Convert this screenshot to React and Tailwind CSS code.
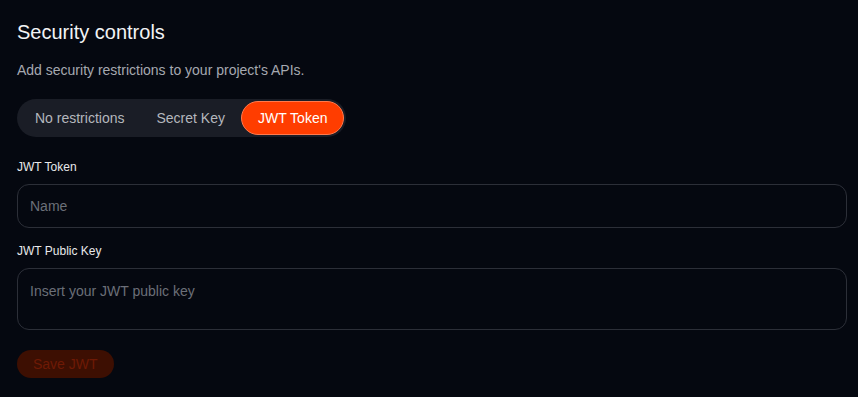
export default function App() {
  return (
    <div
      className="min-h-[397px] w-full bg-[#050810] pl-[17px] pr-[11px] pt-[18px] pb-4"
      style={{ fontFamily: '"Liberation Sans", Arial, sans-serif' }}
    >
      <h1 className="text-[20px] leading-[28px] text-[#f2f3f5]">Security controls</h1>
      <p className="mt-[14px] text-[14px] leading-[20px] text-[#a6a9b0]">
        Add security restrictions to your project's APIs.
      </p>
      <div className="mt-[19px] inline-flex h-[38px] items-center rounded-full bg-[#1a1d26] p-[2px]">
        <button className="h-[34px] rounded-full px-4 text-[14px] text-[#b4b7bd]">No restrictions</button>
        <button className="h-[34px] rounded-full px-4 text-[14px] text-[#b4b7bd]">Secret Key</button>
        <button className="h-[34px] rounded-full border border-[#ff7a4d] bg-[#ff3d00] px-4 text-[14px] text-white">
          JWT Token
        </button>
      </div>
      <div className="mt-[22px] flex flex-col">
        <label className="text-[12px] leading-[16px] text-[#e8e9eb]">JWT Token</label>
        <input
          placeholder="Name"
          className="mt-[9px] h-[44px] w-full rounded-[12px] border border-[#2c2f38] bg-transparent px-3 text-[14px] text-white outline-none placeholder:text-[#6b6f78]"
        />
        <label className="mt-[15px] text-[12px] leading-[16px] text-[#e8e9eb]">JWT Public Key</label>
        <textarea
          placeholder="Insert your JWT public key"
          className="mt-[9px] h-[62px] w-full resize-none rounded-[12px] border border-[#2c2f38] bg-transparent px-3 py-[12px] text-[14px] leading-[20px] text-white outline-none placeholder:text-[#6b6f78]"
        />
      </div>
      <button className="mt-[20px] h-[28px] rounded-full bg-[#3d0f02] px-4 text-[14px] text-[#6e1a05]">
        Save JWT
      </button>
    </div>
  );
}
